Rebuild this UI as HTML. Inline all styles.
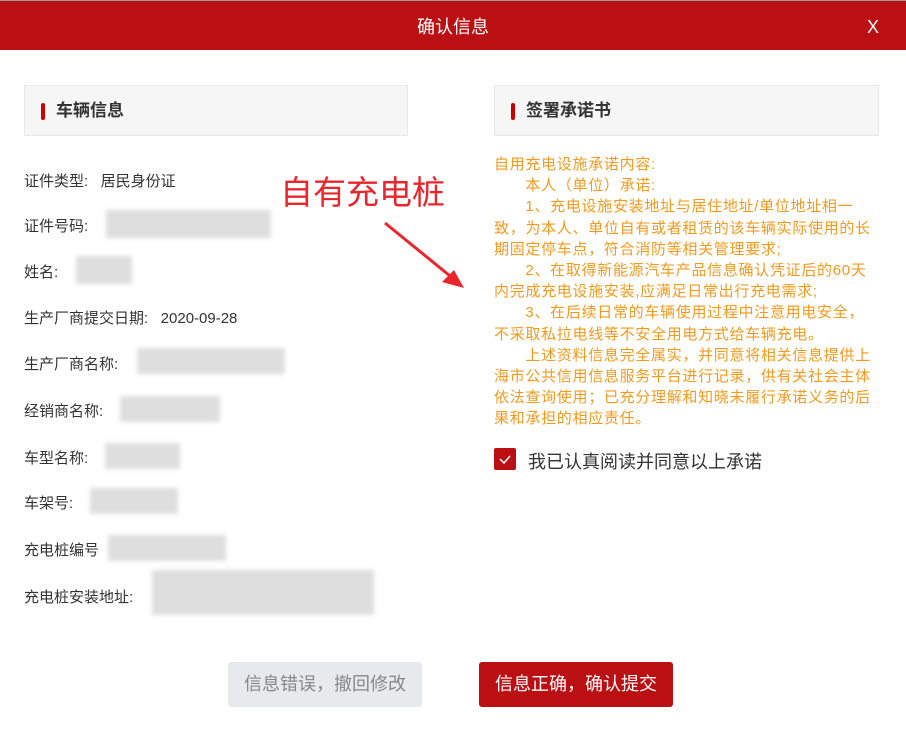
<!DOCTYPE html>
<html><head><meta charset="utf-8"><style>
body{margin:0;width:906px;height:738px;overflow:hidden;background:#fff;font-family:"Liberation Sans","Noto Sans CJK SC",sans-serif;position:relative}
.hdr{position:absolute;left:0;top:0;width:906px;height:50px;background:#bb1013;border-top:1px solid #999;box-sizing:border-box;color:#fff;text-align:center;font-size:18px;line-height:52px}
.x{position:absolute;right:27px;top:0;font-size:18px;color:#fff}
.box{position:absolute;top:85px;height:51px;background:#f6f6f6;border:1px solid #e8e8e8;box-sizing:border-box;font-size:17px;font-weight:bold;color:#333;line-height:49px;padding-left:31px}
.box:before{content:"";position:absolute;left:16px;top:17px;width:4px;height:17px;background:#c00;border-radius:2px}
.lab{position:absolute;left:24px;font-size:15px;color:#333}
.blur{position:absolute;background:#d6d6d6;filter:blur(2px);opacity:.8}
.txt{position:absolute;left:494px;top:154px;width:390px;font-size:15px;letter-spacing:0.7px;line-height:21.2px;color:#f39a1e}
.btn{position:absolute;top:662px;height:45px;width:194px;border-radius:3px;text-align:center;line-height:45px;font-size:18px}
</style></head><body>
<div class="hdr">确认信息<span class="x">X</span></div>
<div class="box" style="left:24px;width:384px">车辆信息</div>
<div class="box" style="left:494px;width:385px">签署承诺书</div>
<div class="lab" style="top:170px">证件类型:&nbsp;&nbsp;&nbsp;居民身份证</div>
<div class="lab" style="top:215px">证件号码:</div><div class="blur" style="left:106px;top:210px;width:165px;height:28px"></div>
<div class="lab" style="top:261px">姓名:</div><div class="blur" style="left:76px;top:256px;width:56px;height:28px"></div>
<div class="lab" style="top:307px">生产厂商提交日期:&nbsp;&nbsp;&nbsp;2020-09-28</div>
<div class="lab" style="top:353px">生产厂商名称:</div><div class="blur" style="left:137px;top:348px;width:148px;height:26px"></div>
<div class="lab" style="top:400px">经销商名称:</div><div class="blur" style="left:120px;top:396px;width:100px;height:26px"></div>
<div class="lab" style="top:447px">车型名称:</div><div class="blur" style="left:105px;top:443px;width:75px;height:26px"></div>
<div class="lab" style="top:492px">车架号:</div><div class="blur" style="left:90px;top:488px;width:88px;height:26px"></div>
<div class="lab" style="top:539px">充电桩编号</div><div class="blur" style="left:108px;top:535px;width:118px;height:26px"></div>
<div class="lab" style="top:586px">充电桩安装地址:</div><div class="blur" style="left:152px;top:570px;width:222px;height:45px"></div>
<div style="position:absolute;left:280px;top:166px;font-size:33px;color:#e8262c">自有充电桩</div>
<svg style="position:absolute;left:380px;top:218px" width="90" height="80"><line x1="5" y1="5" x2="75" y2="62" stroke="#e8262c" stroke-width="3"/><polygon points="84,70 62,64 74,52" fill="#e8262c"/></svg>
<div class="txt">自用充电设施承诺内容:<br>&emsp;&emsp;本人（单位）承诺:<br>&emsp;&emsp;1、充电设施安装地址与居住地址/单位地址相一<br>致，为本人、单位自有或者租赁的该车辆实际使用的长<br>期固定停车点，符合消防等相关管理要求;<br>&emsp;&emsp;2、在取得新能源汽车产品信息确认凭证后的60天<br>内完成充电设施安装,应满足日常出行充电需求;<br>&emsp;&emsp;3、在后续日常的车辆使用过程中注意用电安全，<br>不采取私拉电线等不安全用电方式给车辆充电。<br>&emsp;&emsp;上述资料信息完全属实，并同意将相关信息提供上<br>海市公共信用信息服务平台进行记录，供有关社会主体<br>依法查询使用；已充分理解和知晓未履行承诺义务的后<br>果和承担的相应责任。</div>
<div style="position:absolute;left:494px;top:448px;width:22px;height:22px;background:#bb1013;border-radius:2px"><svg width="22" height="22"><path d="M6 11 L10 15 L16 8" stroke="#fff" stroke-width="1.5" fill="none"/></svg></div>
<div style="position:absolute;left:528px;top:448px;font-size:18px;color:#333">我已认真阅读并同意以上承诺</div>
<div class="btn" style="left:228px;background:#e8e9ec;color:#888">信息错误，撤回修改</div>
<div class="btn" style="left:479px;background:#bb1013;color:#fff">信息正确，确认提交</div>
</body></html>
